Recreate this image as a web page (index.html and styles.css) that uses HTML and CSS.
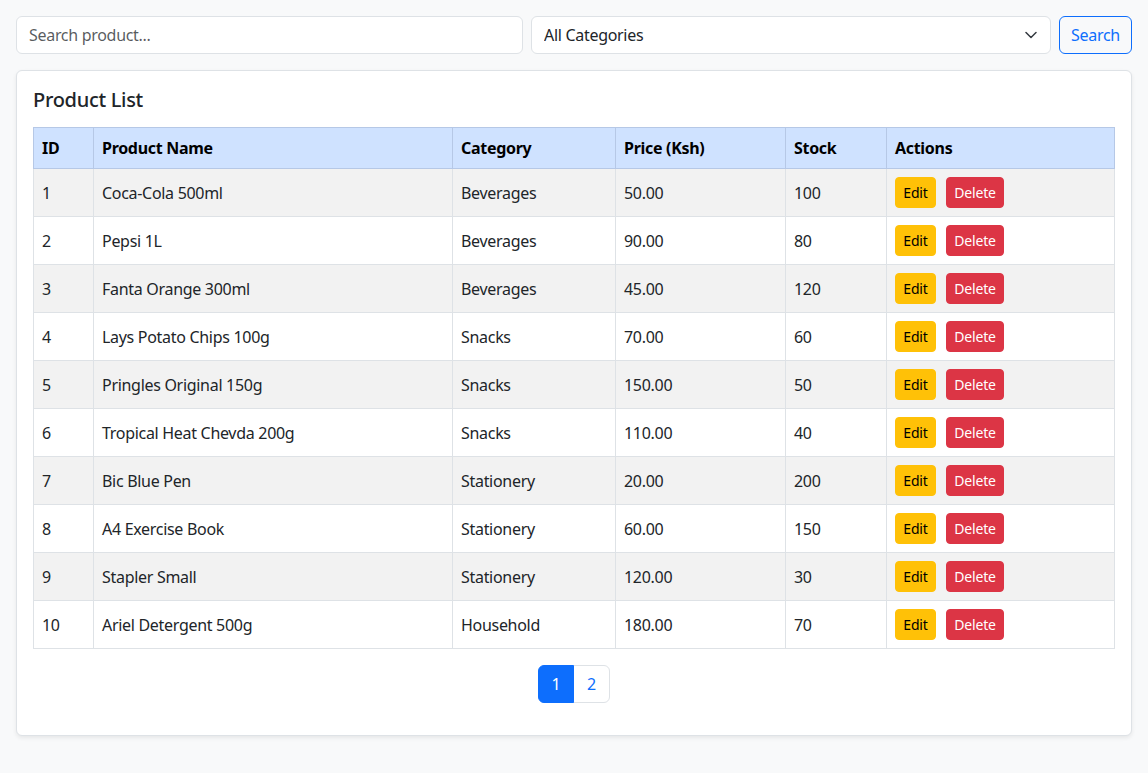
FILE: index.html
```html
<!DOCTYPE html>
<html lang="en">
<head>
<meta charset="utf-8">
<title>Product List</title>
<link rel="stylesheet" href="styles.css">
</head>
<body>
<div class="page">
  <form class="search-bar">
    <input class="form-control" type="text" placeholder="Search product...">
    <div class="select-wrap">
      <select class="form-select">
        <option>All Categories</option>
        <option>Beverages</option>
        <option>Snacks</option>
        <option>Stationery</option>
        <option>Household</option>
      </select>
      <svg class="select-arrow" width="12" height="8" viewBox="0 0 12 8"><path d="M1 1.5l5 5 5-5" fill="none" stroke="#343a40" stroke-width="1.5" stroke-linecap="round" stroke-linejoin="round"/></svg>
    </div>
    <button type="button" class="btn btn-outline">Search</button>
  </form>

  <div class="card">
    <h5 class="card-title">Product List</h5>
    <table class="table">
      <thead>
        <tr>
          <th class="c-id">ID</th>
          <th class="c-name">Product Name</th>
          <th class="c-cat">Category</th>
          <th class="c-price">Price (Ksh)</th>
          <th class="c-stock">Stock</th>
          <th class="c-act">Actions</th>
        </tr>
      </thead>
      <tbody>
        <tr><td>1</td><td>Coca-Cola 500ml</td><td>Beverages</td><td>50.00</td><td>100</td><td><button class="btn-sm btn-edit">Edit</button><button class="btn-sm btn-del">Delete</button></td></tr>
        <tr><td>2</td><td>Pepsi 1L</td><td>Beverages</td><td>90.00</td><td>80</td><td><button class="btn-sm btn-edit">Edit</button><button class="btn-sm btn-del">Delete</button></td></tr>
        <tr><td>3</td><td>Fanta Orange 300ml</td><td>Beverages</td><td>45.00</td><td>120</td><td><button class="btn-sm btn-edit">Edit</button><button class="btn-sm btn-del">Delete</button></td></tr>
        <tr><td>4</td><td>Lays Potato Chips 100g</td><td>Snacks</td><td>70.00</td><td>60</td><td><button class="btn-sm btn-edit">Edit</button><button class="btn-sm btn-del">Delete</button></td></tr>
        <tr><td>5</td><td>Pringles Original 150g</td><td>Snacks</td><td>150.00</td><td>50</td><td><button class="btn-sm btn-edit">Edit</button><button class="btn-sm btn-del">Delete</button></td></tr>
        <tr><td>6</td><td>Tropical Heat Chevda 200g</td><td>Snacks</td><td>110.00</td><td>40</td><td><button class="btn-sm btn-edit">Edit</button><button class="btn-sm btn-del">Delete</button></td></tr>
        <tr><td>7</td><td>Bic Blue Pen</td><td>Stationery</td><td>20.00</td><td>200</td><td><button class="btn-sm btn-edit">Edit</button><button class="btn-sm btn-del">Delete</button></td></tr>
        <tr><td>8</td><td>A4 Exercise Book</td><td>Stationery</td><td>60.00</td><td>150</td><td><button class="btn-sm btn-edit">Edit</button><button class="btn-sm btn-del">Delete</button></td></tr>
        <tr><td>9</td><td>Stapler Small</td><td>Stationery</td><td>120.00</td><td>30</td><td><button class="btn-sm btn-edit">Edit</button><button class="btn-sm btn-del">Delete</button></td></tr>
        <tr><td>10</td><td>Ariel Detergent 500g</td><td>Household</td><td>180.00</td><td>70</td><td><button class="btn-sm btn-edit">Edit</button><button class="btn-sm btn-del">Delete</button></td></tr>
      </tbody>
    </table>
    <nav class="pagination">
      <a class="page-link active" href="#">1</a>
      <a class="page-link" href="#">2</a>
    </nav>
  </div>
</div>
</body>
</html>
```

FILE: styles.css
```css
* { box-sizing: border-box; }

html, body {
  margin: 0;
  padding: 0;
}

body {
  background: #f8f9fa;
  color: #212529;
  font-family: "Noto Sans", "Open Sans", sans-serif;
  font-size: 16px;
  line-height: 1.5;
  letter-spacing: -0.3px;
}

.page {
  padding: 16px;
}

.search-bar {
  display: grid;
  grid-template-columns: 507fr 520fr 73px;
  gap: 8px;
  margin: 0 0 16px 0;
}

.form-control,
.form-select {
  display: block;
  width: 100%;
  height: 38px;
  padding: 6px 12px;
  font: inherit;
  font-size: 16px;
  letter-spacing: -0.3px;
  color: #212529;
  background: #fff;
  border: 1px solid #dee2e6;
  border-radius: 6px;
  outline: none;
}

.form-control::placeholder {
  color: rgba(33, 37, 41, 0.75);
}

.select-wrap {
  position: relative;
}

.form-select {
  appearance: none;
  -webkit-appearance: none;
  padding-right: 36px;
}

.select-arrow {
  position: absolute;
  right: 14px;
  top: 15px;
  pointer-events: none;
}

.btn {
  font: inherit;
  font-size: 16px;
  letter-spacing: -0.3px;
  height: 38px;
  padding: 6px 0;
  width: 73px;
  border-radius: 6px;
  cursor: pointer;
  background: transparent;
  text-align: center;
}

.btn-outline {
  color: #0d6efd;
  border: 1px solid #0d6efd;
}

.card {
  background: #fff;
  border: 1px solid #dee2e6;
  border-radius: 6px;
  box-shadow: 0 2px 4px rgba(0, 0, 0, 0.075);
  padding: 16px;
}

.card-title {
  margin: 0 0 16px 0;
  padding-top: 1px;
  height: 24px;
  font-size: 20px;
  font-weight: 500;
  line-height: 1.2;
}

.table {
  width: 100%;
  border-collapse: collapse;
  margin-bottom: 16px;
  table-layout: fixed;
}

.table th,
.table td {
  padding: 8px;
  text-align: left;
  border: 1px solid #dee2e6;
  vertical-align: middle;
}

.table th {
  background: #cfe2ff;
  border-color: #b6c8e6;
  font-weight: 700;
  color: #000;
}

.table tbody tr:nth-child(odd) td {
  background: #f2f2f2;
}

.c-id { width: 60px; }
.c-name { width: 359px; }
.c-cat { width: 163px; }
.c-price { width: 170px; }
.c-stock { width: 101px; }

.btn-sm {
  font: inherit;
  font-size: 14px;
  letter-spacing: -0.2px;
  line-height: 1.5;
  height: 31px;
  padding: 0;
  text-align: center;
  border-radius: 4px;
  border: 1px solid transparent;
  cursor: pointer;
  vertical-align: middle;
}

.btn-edit {
  width: 41px;
  background: #ffc107;
  border-color: #ffc107;
  color: #000;
  margin-right: 10px;
}

.btn-del {
  width: 58px;
  background: #dc3545;
  border-color: #dc3545;
  color: #fff;
}

.pagination {
  display: flex;
  justify-content: center;
  margin-bottom: 16px;
}

.page-link {
  display: block;
  width: 37px;
  padding: 6px 0;
  text-align: center;
  font-size: 16px;
  line-height: 1.5;
  letter-spacing: 0;
  color: #0d6efd;
  text-decoration: none;
  background: #fff;
  border: 1px solid #dee2e6;
}

.page-link + .page-link {
  margin-left: -1px;
}

.page-link:first-child {
  width: 36px;
  border-radius: 6px 0 0 6px;
}

.page-link:last-child {
  border-radius: 0 6px 6px 0;
}

.page-link.active {
  background: #0d6efd;
  border-color: #0d6efd;
  color: #fff;
  position: relative;
  z-index: 1;
}
```
